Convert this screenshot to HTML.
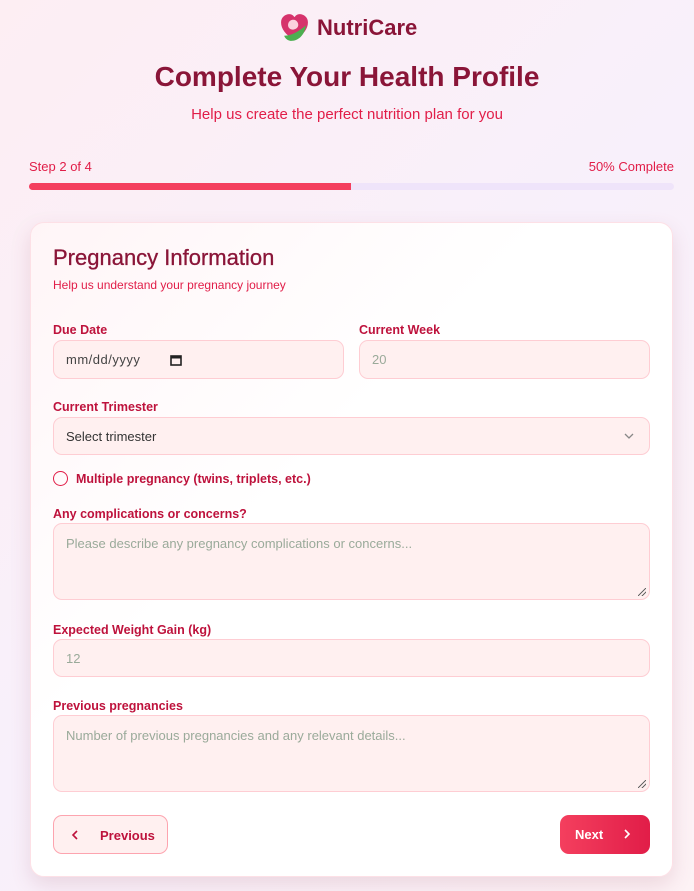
<!DOCTYPE html>
<html><head><meta charset="utf-8"><style>
*{box-sizing:border-box;margin:0;padding:0}
body{width:694px;height:891px;overflow:hidden;font-family:"Liberation Sans",sans-serif;background:linear-gradient(135deg,#fdeef3 0%,#f8f0fb 50%,#fdf2f5 100%);position:relative}
.abs{position:absolute}
.logo{left:279px;top:12px;display:flex;align-items:center;gap:7px}
.logo span{font-size:22px;font-weight:bold;color:#8a1538}
h1{position:absolute;top:61px;width:100%;text-align:center;font-size:28px;color:#8a1538;font-weight:bold}
.sub{top:106px;width:100%;text-align:center;font-size:15px;color:#e11d48}
.step{font-size:13px;color:#e11d48;top:159px}
.bar{left:29px;top:183px;width:645px;height:7px;border-radius:4px;background:#efe4fa;overflow:hidden}
.bar div{width:322px;height:100%;background:#f43f5e}
.card{left:30px;top:222px;width:643px;height:655px;background:linear-gradient(135deg,#fff5f7 0%,#fff 40%,#fff 100%);border:1px solid #fde0e6;border-radius:14px;box-shadow:0 8px 20px rgba(150,60,90,.15)}
.card h2{position:absolute;left:22px;top:22px;font-size:22px;font-weight:normal;color:#8a1538;-webkit-text-stroke:0.3px #8a1538}
.lab{font-size:12.5px;font-weight:bold;color:#be123c}
.inp{background:#fff0f0;border:1px solid #fecdd3;border-radius:9px;font-size:13px;color:#9aaa9a;padding-left:12px;display:flex;align-items:center}
.ta{align-items:flex-start;padding-top:12px}
.btnp{left:22px;top:592px;width:115px;height:39px;border:1px solid #fda4af;background:#fff0f0;border-radius:9px;color:#be123c;font-size:13px;font-weight:bold}
.btnn{left:529px;top:592px;width:90px;height:39px;background:linear-gradient(90deg,#f43f5e,#e11d48);border-radius:9px;color:#fff;font-size:13px;font-weight:bold}
.grip{position:absolute;right:3px;bottom:3px;width:8px;height:8px;background:linear-gradient(135deg,transparent 45%,#666 45%,#666 55%,transparent 55%,transparent 70%,#666 70%,#666 80%,transparent 80%)}
</style></head><body>
<div class="abs logo"><svg width="31" height="31" viewBox="0 0 30 30"><path d="M15 27C6 22 2 16 2 10 2 5 6 2 10 2c2.5 0 4 1.5 5 3 1-1.5 2.5-3 5-3 4 0 8 3 8 8 0 6-4 12-13 17z" fill="#d6336c"/><path d="M9 11c1-4 7-5 9-1 2 4-1 7-5 7-3 0-5-3-4-6z" fill="#fbd0de"/><path d="M5 23c7 0 14-4 21-10-1 9-7 15-14 15-3 0-6-2-7-5z" fill="#4caf50"/></svg><span>NutriCare</span></div>
<h1>Complete Your Health Profile</h1>
<div class="abs sub">Help us create the perfect nutrition plan for you</div>
<div class="abs step" style="left:29px">Step 2 of 4</div>
<div class="abs step" style="right:20px">50% Complete</div>
<div class="abs bar"><div></div></div>
<div class="abs card">
<h2>Pregnancy Information</h2>
<div class="abs" style="left:22px;top:55px;font-size:12px;color:#e11d48">Help us understand your pregnancy journey</div>
<div class="abs lab" style="left:22px;top:100px">Due Date</div>
<div class="abs inp" style="left:22px;top:117px;width:291px;height:39px;color:#444;letter-spacing:0.5px">mm/dd/yyyy<svg style="margin-left:30px" width="12" height="12"><rect x="1" y="2" width="10" height="9" fill="none" stroke="#222" stroke-width="1.6"/><rect x="1" y="2" width="10" height="2.5" fill="#222"/></svg></div>
<div class="abs lab" style="left:328px;top:100px">Current Week</div>
<div class="abs inp" style="left:328px;top:117px;width:291px;height:39px">20</div>
<div class="abs lab" style="left:22px;top:177px">Current Trimester</div>
<div class="abs inp" style="left:22px;top:194px;width:597px;height:38px;color:#333">Select trimester<svg style="position:absolute;right:15px;top:14px" width="10" height="8"><path d="M1 2l4 4 4-4" fill="none" stroke="#888" stroke-width="1.3"/></svg></div>
<div class="abs" style="left:22px;top:248px;width:15px;height:15px;border:1.5px solid #e11d48;border-radius:50%"></div>
<div class="abs lab" style="left:45px;top:249px">Multiple pregnancy (twins, triplets, etc.)</div>
<div class="abs lab" style="left:22px;top:284px">Any complications or concerns?</div>
<div class="abs inp ta" style="left:22px;top:300px;width:597px;height:77px">Please describe any pregnancy complications or concerns...<div class="grip"></div></div>
<div class="abs lab" style="left:22px;top:400px">Expected Weight Gain (kg)</div>
<div class="abs inp" style="left:22px;top:416px;width:597px;height:38px">12</div>
<div class="abs lab" style="left:22px;top:476px">Previous pregnancies</div>
<div class="abs inp ta" style="left:22px;top:492px;width:597px;height:77px">Number of previous pregnancies and any relevant details...<div class="grip"></div></div>
<div class="abs btnp"><svg class="abs" style="left:17px;top:14px" width="8" height="10"><path d="M6 1L2 5l4 4" fill="none" stroke="#be123c" stroke-width="1.6"/></svg><span class="abs" style="left:46px;top:12px">Previous</span></div>
<div class="abs btnn"><span class="abs" style="left:15px;top:12px">Next</span><svg class="abs" style="left:63px;top:14px" width="8" height="10"><path d="M2 1l4 4-4 4" fill="none" stroke="#fff" stroke-width="1.6"/></svg></div>
</div>
</body></html>
